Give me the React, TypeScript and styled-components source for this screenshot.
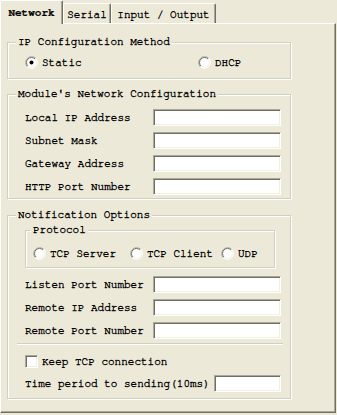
import React from "react";
import styled, { createGlobalStyle } from "styled-components";

const Global = createGlobalStyle`
  html, body { margin: 0; padding: 0; background: #ece9d8; }
  body {
    font-family: "Nimbus Mono PS", "Nimbus Mono L", "FreeMono", "Courier 10 Pitch", "Liberation Mono", monospace;
    font-size: 11px;
    color: #000;
    -webkit-text-stroke: 0.35px #000;
  }
  * { box-sizing: border-box; }
`;

const Root = styled.div`
  width: 337px;
  height: 415px;
  display: flex;
  flex-direction: column;
  background: #ece9d8;
  overflow: hidden;
`;

const TabStrip = styled.div`
  display: flex;
  align-items: flex-end;
  height: 23px;
  position: relative;
  z-index: 1;
`;

const Tab = styled.div<{ $w: number; $selected?: boolean }>`
  width: ${(p) => p.$w}px;
  height: ${(p) => (p.$selected ? 24 : 20)}px;
  margin-bottom: ${(p) => (p.$selected ? -1 : 0)}px;
  padding-top: ${(p) => (p.$selected ? 0 : 2)}px;
  background: #ece9d8;
  border-top: 1px solid #fff;
  border-left: 1px solid #fff;
  border-right: 1px solid #716f64;
  box-shadow: inset -1px 0 #aca899;
  border-radius: 2px 2px 0 0;
  display: flex;
  align-items: center;
  justify-content: center;
  font-weight: ${(p) => (p.$selected ? "bold" : "normal")};
  -webkit-text-stroke: ${(p) => (p.$selected ? "0.2px" : "0.35px")} #000;
  white-space: pre;
  line-height: 13px;
`;

const Panel = styled.div`
  width: 336px;
  height: 390px;
  border-top: 1px solid #fff;
  border-left: 1px solid #fff;
  border-right: 1px solid #716f64;
  border-bottom: 1px solid #716f64;
  box-shadow: inset -1px -1px #aca899;
  padding: 18px 0 0 6px;
  display: flex;
  flex-direction: column;
  align-items: flex-start;
`;

const Group = styled.div<{ $w: number; $top?: number; $pad: string }>`
  position: relative;
  width: ${(p) => p.$w}px;
  margin-top: ${(p) => p.$top ?? 0}px;
  padding: ${(p) => p.$pad};
  border: 1px solid #d0d0bf;
  box-shadow: inset 1px 1px #fff, 1px 1px #fff;
  display: flex;
  flex-direction: column;
`;

const Legend = styled.span<{ $left: number }>`
  position: absolute;
  top: -8px;
  left: ${(p) => p.$left}px;
  padding: 0 2px;
  background: #ece9d8;
  line-height: 13px;
  white-space: pre;
`;

const RadioGrid = styled.div<{ $cols: string }>`
  display: grid;
  grid-template-columns: ${(p) => p.$cols};
  height: 13px;
  align-items: center;
`;

const Option = styled.label`
  display: flex;
  align-items: center;
  gap: 4px;
  line-height: 13px;
  white-space: pre;
`;

const Rows = styled.div<{ $top?: number }>`
  display: flex;
  flex-direction: column;
  gap: 6px;
  margin-top: ${(p) => p.$top ?? 0}px;
`;

const FieldRow = styled.div<{ $cols: string }>`
  display: grid;
  grid-template-columns: ${(p) => p.$cols};
  align-items: center;
  height: 17px;
`;

const FieldLabel = styled.span`
  line-height: 13px;
  white-space: pre;
`;

const TextBox = styled.div<{ $w: number }>`
  width: ${(p) => p.$w}px;
  height: 17px;
  background: #fff;
  border-top: 1px solid #aca899;
  border-left: 1px solid #aca899;
  border-right: 1px solid #fff;
  border-bottom: 1px solid #fff;
  box-shadow: inset 1px 1px #716f64, inset -1px -1px #f1efe2;
`;

const Separator = styled.div`
  margin: 4px 0 0 -8px;
  width: 266px;
  height: 2px;
  border-top: 1px solid #d0d0bf;
  border-bottom: 1px solid #fff;
`;

const CheckBox = styled.span`
  width: 13px;
  height: 13px;
  flex: none;
  background: #fff;
  border-top: 1px solid #aca899;
  border-left: 1px solid #aca899;
  border-right: 1px solid #fff;
  border-bottom: 1px solid #fff;
  box-shadow: inset 1px 1px #716f64, inset -1px -1px #f1efe2;
`;

const CheckRow = styled.div`
  margin-top: 10px;
  height: 13px;
  display: flex;
`;

const TimeRow = styled.div`
  margin-top: 7px;
  height: 17px;
  display: flex;
  align-items: center;
  gap: 4px;
`;

const Radio = ({ checked }: { checked?: boolean }) => (
  <svg width="13" height="13" viewBox="0 0 13 13" style={{ flex: "none" }}>
    <circle cx="6.5" cy="6.5" r="6" fill="#fff" />
    <path d="M2.26 10.74 A6 6 0 0 1 10.74 2.26" fill="none" stroke="#aca899" strokeWidth="1" />
    <path d="M2.96 10.04 A5 5 0 0 1 10.04 2.96" fill="none" stroke="#716f64" strokeWidth="1" />
    <path d="M10.74 2.26 A6 6 0 0 1 2.26 10.74" fill="none" stroke="#fff" strokeWidth="1" />
    <path d="M10.04 2.96 A5 5 0 0 1 2.96 10.04" fill="none" stroke="#f1efe2" strokeWidth="1" />
    {checked && <circle cx="6.5" cy="6.5" r="2" fill="#000" />}
  </svg>
);

const Field = ({ label }: { label: string }) => (
  <FieldRow $cols="128px 128px">
    <FieldLabel>{label}</FieldLabel>
    <TextBox $w={128} />
  </FieldRow>
);

export default function App() {
  return (
    <>
      <Global />
      <Root>
        <TabStrip>
          <Tab $w={63} $selected>Network</Tab>
          <Tab $w={48}>Serial</Tab>
          <Tab $w={105}>Input / Output</Tab>
        </TabStrip>
        <Panel>
          <Group $w={284} $pad="13px 9px 9px 17px">
            <Legend $left={8}>IP Configuration Method</Legend>
            <RadioGrid $cols="173px auto">
              <Option>
                <Radio checked />
                Static
              </Option>
              <Option>
                <Radio />
                DHCP
              </Option>
            </RadioGrid>
          </Group>

          <Group $w={284} $top={15} $pad="14px 9px 3px 17px">
            <Legend $left={8}>Module's Network Configuration</Legend>
            <Rows>
              <Field label="Local IP Address" />
              <Field label="Subnet Mask" />
              <Field label="Gateway Address" />
              <Field label="HTTP Port Number" />
            </Rows>
          </Group>

          <Group $w={284} $top={16} $pad="14px 9px 6px 17px">
            <Legend $left={8}>Notification Options</Legend>
            <Group $w={250} $pad="16px 7px 7px 7px">
              <Legend $left={5}>Protocol</Legend>
              <RadioGrid $cols="97px 91px auto">
                <Option>
                  <Radio />
                  TCP Server
                </Option>
                <Option>
                  <Radio />
                  TCP Client
                </Option>
                <Option>
                  <Radio />
                  UDP
                </Option>
              </RadioGrid>
            </Group>
            <Rows $top={8}>
              <Field label="Listen Port Number" />
              <Field label="Remote IP Address" />
              <Field label="Remote Port Number" />
            </Rows>
            <Separator />
            <CheckRow>
              <Option>
                <CheckBox />
                Keep TCP connection
              </Option>
            </CheckRow>
            <TimeRow>
              <FieldLabel>Time period to sending(10ms)</FieldLabel>
              <TextBox $w={68} />
            </TimeRow>
          </Group>
        </Panel>
      </Root>
    </>
  );
}
